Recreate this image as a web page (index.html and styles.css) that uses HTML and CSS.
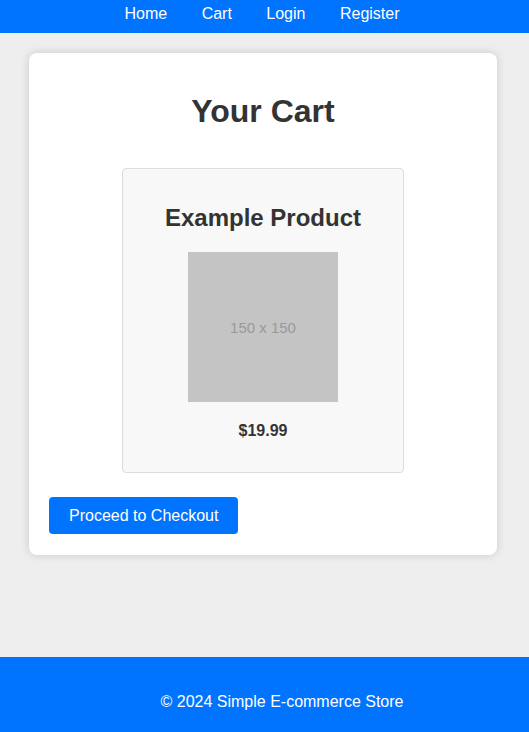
FILE: index.html
```html
<!DOCTYPE html>
<html lang="en">
<head>
<meta charset="utf-8">
<title>Your Cart</title>
<link rel="stylesheet" href="styles.css">
</head>
<body>
<nav class="nav">
  <a class="nav-link" href="#">Home</a>
  <a class="nav-link" href="#">Cart</a>
  <a class="nav-link" href="#">Login</a>
  <a class="nav-link" href="#">Register</a>
</nav>
<main class="main">
  <section class="container">
    <h1 class="title">Your Cart</h1>
    <div class="cart-items">
      <div class="product">
        <h2 class="product-name">Example Product</h2>
        <div class="product-image-wrap"><span class="product-image">150 x 150</span></div>
        <p class="price">$19.99</p>
      </div>
    </div>
    <button class="checkout">Proceed to Checkout</button>
  </section>
</main>
<footer class="footer">
  <p class="footer-text">&copy; 2024 Simple E-commerce Store</p>
</footer>
</body>
</html>
```
FILE: styles.css
```css
* { box-sizing: content-box; }
html, body {
  margin: 0;
  padding: 0;
}
body {
  font-family: "Liberation Sans", Arial, sans-serif;
  background: #eeeeee;
  color: #333333;
  font-size: 16px;
}
.nav {
  background: #0073ff;
  text-align: center;
  padding: 5px 5px 10px 0;
  line-height: 18px;
}
.nav-link {
  color: #ffffff;
  text-decoration: none;
  margin: 0 15px;
}
.main {
  padding: 20px 0 102px;
}
.container {
  width: 428px;
  margin-left: 29px;
  background: #ffffff;
  padding: 20px 20px 21px;
  border-radius: 8px;
  box-shadow: 0 0 10px rgba(0, 0, 0, 0.15);
}
.title {
  text-align: center;
  font-size: 32px;
  margin: 20px 0 23px;
  line-height: 37px;
}
.cart-items {
  text-align: center;
}
.product {
  display: inline-block;
  width: 250px;
  padding: 15px;
  margin: 15px 0;
  background: #f8f8f8;
  border: 1px solid #dddddd;
  border-radius: 4px;
  text-align: center;
  vertical-align: top;
}
.product-name {
  font-size: 24px;
  margin: 20px 0;
  line-height: 28px;
}
.product-image-wrap {
  line-height: 0;
  padding-bottom: 4px;
}
.product-image {
  display: inline-flex;
  align-items: center;
  justify-content: center;
  width: 150px;
  height: 150px;
  background: #c4c4c4;
  color: #999999;
  font-size: 15px;
  line-height: 18px;
  padding-top: 2px;
  box-sizing: border-box;
}
.price {
  font-weight: bold;
  margin: 16px 0 17px;
  line-height: 18px;
}
.checkout {
  display: block;
  margin-top: 9px;
  background: #0073ff;
  color: #ffffff;
  border: none;
  border-radius: 4px;
  padding: 10px 20px;
  font-family: "Liberation Sans", Arial, sans-serif;
  font-size: 16px;
  line-height: 17px;
  cursor: pointer;
}
.footer {
  background: #0073ff;
  color: #ffffff;
  text-align: center;
  padding: 20px 0 20px 35px;
}
.footer-text {
  margin: 16px 0;
  line-height: 18px;
}
```
